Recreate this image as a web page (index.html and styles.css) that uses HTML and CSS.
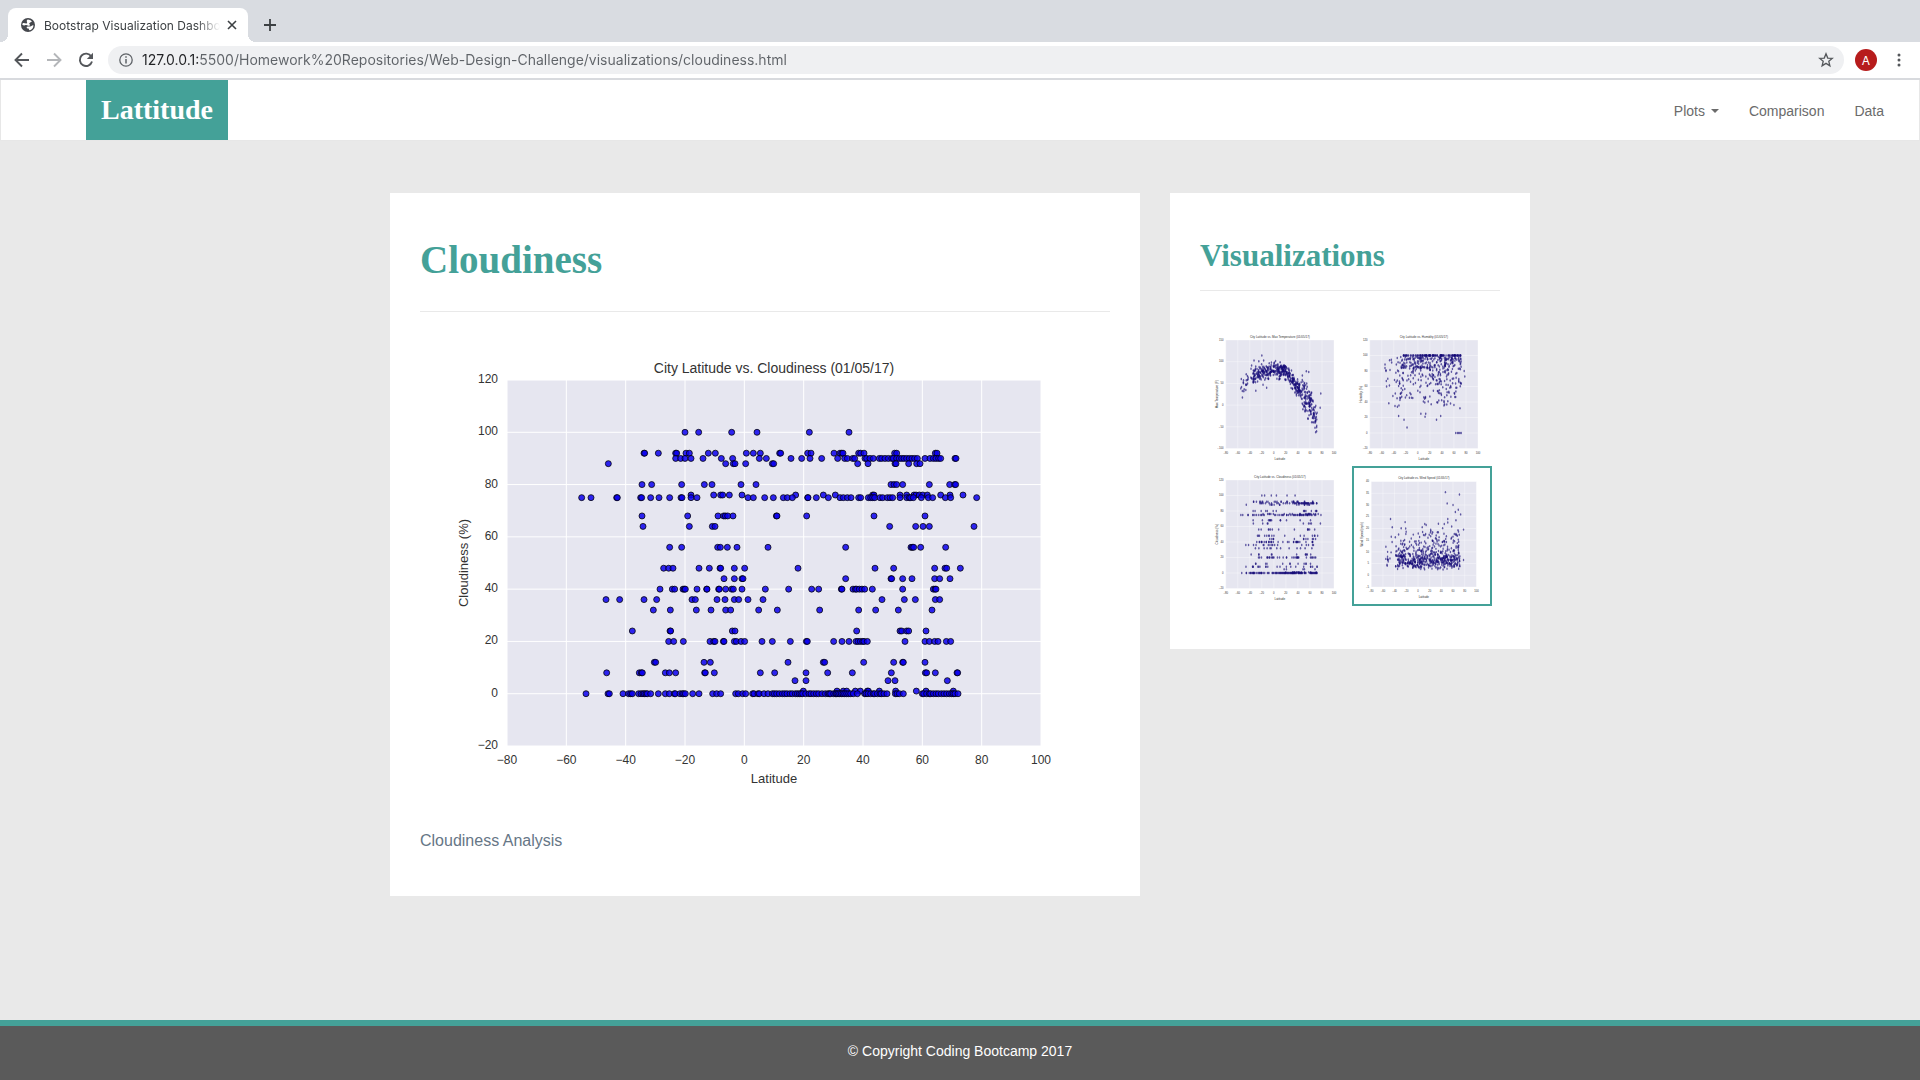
FILE: index.html
```html
<!DOCTYPE html>
<html lang="en">
<head>
<meta charset="utf-8">
<meta name="viewport" content="width=device-width, initial-scale=1">
<title>Bootstrap Visualization Dashboard</title>
<link rel="stylesheet" href="styles.css">
</head>
<body>
<header class="browser">
  <div class="tabstrip">
    <div class="tab">
      <svg class="tab-icon" viewBox="0 0 24 24" aria-hidden="true"><circle cx="12" cy="12" r="12" fill="#45484d"/><path d="M3 9c3-1 5 1 7 0 2-2-2-3 1-6 2-1 3 1 4 0l4 3c-2 0-3 2-5 3 0 2 3 3 1 4-3 1-4-2-7-1-2 1-4 1-6-1zM10 15c3-1 6 0 7-1l4-2c1 4-2 8-6 9-2 0-1-2-2-3-2 0-4 0-3-3z" fill="#fff"/></svg>
      <span class="tab-title">Bootstrap Visualization Dashboard</span>
      <button class="icon-button tab-close" aria-label="Close tab"><svg viewBox="0 0 10 10"><path d="M1 1l8 8M9 1L1 9" stroke="#3c4043" stroke-width="1.6"/></svg></button>
    </div>
    <button class="icon-button tab-new" aria-label="New tab"><svg viewBox="0 0 12 12"><path d="M6 0v12M0 6h12" stroke="#3c4043" stroke-width="1.8"/></svg></button>
  </div>
  <div class="toolbar">
    <button class="icon-button tool" aria-label="Back"><svg viewBox="0 0 16 16"><path d="M15 8H2M8 1.500L1.500 8L8 14.500" fill="none" stroke="#54575b" stroke-width="1.900"/></svg></button>
    <button class="icon-button tool" aria-label="Forward"><svg viewBox="0 0 16 16"><path d="M1 8h13M8 1.500L14.500 8L8 14.500" fill="none" stroke="#b4b6b9" stroke-width="1.900"/></svg></button>
    <button class="icon-button tool" aria-label="Reload"><svg viewBox="0 0 16 16"><path d="M13.300 4.500A6.200 6.200 0 1 0 14 9.500" fill="none" stroke="#54575b" stroke-width="1.900"/><path d="M15 .8V7H8.800z" fill="#54575b"/></svg></button>
    <div class="address">
      <svg class="address-icon" viewBox="0 0 14 14" aria-hidden="true"><circle cx="7" cy="7" r="6.200" fill="none" stroke="#5f6368" stroke-width="1.300"/><path d="M7 6v4.500M7 3.300v1.500" stroke="#5f6368" stroke-width="1.500"/></svg>
      <input class="address-input" type="text" aria-label="Address" value="127.0.0.1:5500/Homework%20Repositories/Web-Design-Challenge/visualizations/cloudiness.html">
      <button class="icon-button star" aria-label="Bookmark"><svg viewBox="0 0 24 24"><path d="M12 2.800l2.600 6.300 6.800.5-5.200 4.400 1.600 6.600-5.800-3.500-5.800 3.500 1.600-6.600-5.200-4.400 6.800-.5z" fill="none" stroke="#54575b" stroke-width="2"/></svg></button>
    </div>
    <button class="avatar">A</button>
    <button class="icon-button menu" aria-label="Menu"><svg viewBox="0 0 4 14"><circle cx="2" cy="2" r="1.500"/><circle cx="2" cy="7" r="1.500"/><circle cx="2" cy="12" r="1.500"/></svg></button>
  </div>
</header>

<nav class="navbar">
  <a class="brand" href="#">Lattitude</a>
  <div class="nav-links">
    <button class="nav-link">Plots<span class="caret"></span></button>
    <a class="nav-link" href="#">Comparison</a>
    <a class="nav-link" href="#">Data</a>
  </div>
</nav>

<main class="content">
  <article class="card">
    <h1 class="title">Cloudiness</h1>
    <svg class="chart" id="cloudiness" viewBox="0 0 690 470" role="img"></svg>
    <p class="analysis">Cloudiness Analysis</p>
  </article>
  <aside class="card">
    <h2 class="subtitle">Visualizations</h2>
    <div class="thumbs">
      <a class="thumb" href="#"><svg id="thumb-temperature" viewBox="0 0 560 560" role="img"></svg></a>
      <a class="thumb" href="#"><svg id="thumb-humidity" viewBox="0 0 560 560" role="img"></svg></a>
      <a class="thumb" href="#"><svg id="thumb-cloudiness" viewBox="0 0 560 560" role="img"></svg></a>
      <a class="thumb thumb-active" href="#"><svg id="thumb-wind" viewBox="0 0 560 560" role="img"></svg></a>
    </div>
  </aside>
</main>

<footer class="footer">© Copyright Coding Bootcamp 2017</footer>
<script src="charts.js"></script>
</body>
</html>
```
FILE: styles.css
```css
* { box-sizing: border-box; }

body {
  margin: 0;
  min-height: 100vh;
  display: flex;
  flex-direction: column;
  background: #e9e9e9;
  font-family: Arial, "Liberation Sans", sans-serif;
  font-size: 14px;
}

button {
  border: 0;
  padding: 0;
  background: none;
  font: inherit;
  color: inherit;
}

a { text-decoration: none; }
svg { display: block; }

/* Browser frame */
.browser {
  background: #fff;
  border-bottom: 2px solid #d8dade;
  font-family: Inter, Roboto, sans-serif;
}

.tabstrip {
  display: flex;
  align-items: center;
  height: 42px;
  padding: 8px 8px 0;
  gap: 16px;
  background: #d9dce1;
}

.tab {
  position: relative;
  display: flex;
  align-items: center;
  width: 240px;
  height: 34px;
  padding: 0 11px 0 13px;
  border-radius: 8px 8px 0 0;
  background: #fff;
}

.tab::before,
.tab::after {
  content: "";
  position: absolute;
  bottom: 0;
  width: 8px;
  height: 8px;
}

.tab::before {
  left: -8px;
  background: radial-gradient(circle at 0 0, #d9dce1 8px, #fff 8px);
}

.tab::after {
  right: -8px;
  background: radial-gradient(circle at 100% 0, #d9dce1 8px, #fff 8px);
}

.tab-icon { width: 14px; height: 14px; flex: none; }

.tab-title {
  flex: 1;
  min-width: 0;
  margin: 0 7px 0 9px;
  overflow: hidden;
  white-space: nowrap;
  font-size: 12px;
  color: #3c4043;
  -webkit-mask-image: linear-gradient(to left, transparent, #000 24px);
  mask-image: linear-gradient(to left, transparent, #000 24px);
}

.icon-button { flex: none; display: flex; }
.icon-button svg { width: 100%; height: 100%; }
.tab-close { width: 10px; height: 10px; }
.tab-new { width: 12px; height: 12px; }

.toolbar {
  display: flex;
  align-items: center;
  height: 36px;
  padding: 0 19px 0 14px;
  gap: 16px;
}

.tool { width: 16px; height: 16px; }

.address {
  flex: 1;
  display: flex;
  align-items: center;
  height: 28px;
  margin-left: -2px;
  padding: 0 10px 0 11px;
  border-radius: 14px;
  background: #eff0f2;
}

.address-icon { width: 14px; height: 14px; flex: none; }

.address-input {
  flex: 1;
  min-width: 0;
  margin: 0 8px 0 9px;
  padding: 0;
  border: 0;
  font: 14px/20px Inter, Roboto, sans-serif;
  color: transparent;
  background: linear-gradient(to right, #202124 56px, #5f6368 56px);
  -webkit-background-clip: text;
  background-clip: text;
}

.star { width: 16px; height: 16px; }

.avatar {
  width: 22px;
  height: 22px;
  margin: 0 4px 0 -5px;
  border-radius: 50%;
  background: #b71c1c;
  color: #fff;
  font-size: 12px;
}

.menu { width: 4px; height: 14px; fill: #54575b; }

/* Site navigation */
.navbar {
  display: flex;
  align-items: center;
  justify-content: space-between;
  height: 61px;
  padding: 0 20px 0 85px;
  border: solid #e7e7e7;
  border-width: 0 1px 1px;
  background: #fff;
}

.brand {
  display: flex;
  align-items: center;
  align-self: stretch;
  padding: 0 15px;
  background: #44a198;
  color: #fff;
  font: bold 28px/30px Georgia, "Liberation Serif", serif;
}

.nav-links { display: flex; }

.nav-link {
  display: flex;
  align-items: center;
  padding: 5px 15px 3px;
  font-size: 14px;
  line-height: 20px;
  color: #6b6b6b;
}

.caret {
  margin-left: 6px;
  border: 4px solid transparent;
  border-top-color: #6b6b6b;
  border-bottom: 0;
}

/* Content */
.content {
  width: 100%;
  max-width: 1140px;
  margin: 52px auto;
  display: grid;
  grid-template-columns: 25fr 12fr;
  gap: 30px;
  align-items: start;
}

.card {
  min-width: 0;
  padding: 30px;
  background: #fff;
}

.title,
.subtitle {
  margin: 0;
  padding-top: 16px;
  border-bottom: 1px solid #e9e9e9;
  color: #44a198;
  font-family: Georgia, "Liberation Serif", serif;
}

.title { font-size: 39px; line-height: 42px; padding-bottom: 30px; }
.subtitle { font-size: 31px; line-height: 34px; padding-bottom: 17px; }

.chart { width: 100%; height: auto; margin-top: 18px; }

.analysis {
  margin: 31px 0 15px;
  font-size: 16px;
  line-height: 20px;
  color: #667686;
}

.thumbs {
  display: grid;
  grid-template-columns: 140px 140px;
  justify-content: center;
  column-gap: 4px;
  margin: 35px 0 13px;
}

.thumb { border: 0 solid #44a198; }
.thumb-active { border-width: 2px; }

/* Charts */
.plot-area { fill: #e6e6f0; }
.grid-line { stroke: #fff; stroke-width: 1; }
.label { fill: #333; font-size: 12px; }
.axis-name { font-size: 13px; }
.heading { font-size: 14px; }
.marker { fill: #0a00ee; fill-opacity: .85; stroke: #000; stroke-opacity: .75; stroke-width: 1; }
.thumb .grid-line { stroke-width: 2; stroke-opacity: .7; }
.thumb .label { font-size: 11px; }
.thumb .axis-name, .thumb .heading { font-size: 12px; }
.thumb .marker { fill: #150a78; fill-opacity: .65; stroke: none; }

/* Footer */
.footer {
  margin-top: auto;
  padding: 13px 15px 17px;
  border-top: 6px solid #44a198;
  background: #5a5a5a;
  color: #fff;
  line-height: 24px;
  text-align: center;
}
```
FILE: charts.js
```js
// Each row: cloudiness value, then positions west and east of the seam.
// Positions count thirds of a drawing unit; the east list starts at 900.
const rows = [
  [100, [735,776,875], [51,208,327]],
  [92, [612,614,655,707,710,738,748,805,826,919], [40,61,119,122,203,213,282,300,305,309,356,362,372,464,470,586,591]],
  [90, [707,722,735,753,789,844,878], [58,79,153,185,210,245,293,314,322,338,344,375,380,390,400,418,425,435,445,455,460,470,478,485,492,500,508,516,524,532,555,570,580,588,596,602,645,648]],
  [88, [505,857,880,885,917], [97,101,353,384,465,468,506,530,540]],
  [80, [606,635,725,793,816,903], [48,453,462,470,488,568,629,644,647]],
  [76, [753,821,842,848,868,906], [167,250,286,398,402,480,500,522,528,538,548,562,602,630,669]],
  [75, [425,453,530,532,602,605,632,657,689,723,726,753,771,924], [40,74,100,130,142,157,203,204,229,265,300,310,322,333,356,362,385,392,398,404,420,428,442,450,458,480,500,508,512,520,544,565,578,616,632,710]],
  [68, [606,743,834,851,856,863,879], [109,111,200,402,555]],
  [64, [609,748,817,825], [449,527,549,568,702]],
  [56, [689,725,833,841,862,891], [84,317,513,517,521,542,617]],
  [48, [671,686,699,777,808,840,842,883,914], [174,405,461,584,615,620,661]],
  [44, [852,883,906,909], [317,453,455,488,516,584,599,630]],
  [40, [660,697,704,729,733,736,771,800,801,836,838,857,875,880,906], [76,146,215,236,304,306,339,346,350,358,366,374,397,488,580,585,588]],
  [36, [498,539,612,650,756,766,831,855,883,896,924], [69,426,493,526,586,599]],
  [32, [640,691,769,813,857,872], [56,112,239,356,407,475,576]],
  [24, [577,690,692,877,885], [350,480,485,500,506,558]],
  [20, [686,701,730,810,821,825,850,852,883,889,903,914], [66,97,151,199,202,281,306,327,348,354,361,368,372,382,495,555,568,584,594,619,632]],
  [12, [643,647,792,811], [144,250,254,371,461,488,490,555]],
  [8, [500,598,604,607,676,688,707,794,796,823], [61,104,198,263,337,454,556,560,586,651,653]],
  [5, [], [165,198,444,465,622]],
  [1, [], [190,291,310,320,346,361,382,385,418,467,529,558,640]],
  [0, [438,504,508,549,566,572,577,596,603,609,613,618,622,632,655,676,688,703,706,720,727,731,736,758,777,818,830,842,887,895,908,917], [38,42,54,58,72,84,97,103,110,118,127,134,141,150,157,166,172,178,183,188,197,207,213,221,229,236,246,256,264,268,272,281,287,290,294,299,304,309,314,320,326,332,340,352,374,378,384,392,400,404,412,420,424,432,441,466,471,478,490,547,551,560,568,572,580,588,595,604,612,620,628,635,640,645,654]]
];
const toLatitude = u => (u - 201) / 8.9 - 80;
const cloudiness = rows.flatMap(([v, west, east]) =>
  west.concat(east.map(e => e + 900)).map(u => [toLatitude(u), v]));

let seed = 7;
const rand = () => (seed = seed * 16807 % 2147483647) / 2147483647;
const gauss = () => rand() + rand() + rand() + rand() - 2;
const expo = () => -Math.log(1 - rand());
const latitude = () => {
  const r = rand();
  if (r < .04) return -55 + rand() * 20;
  if (r < .36) return -35 + rand() * 40;
  return 5 + rand() * 67;
};

const curve = [[-56, 36], [-45, 58], [-30, 70], [-10, 78], [18, 80], [32, 55], [45, 28], [60, 8], [66, -20], [73, -45]];
const meanTemperature = lat => {
  const i = Math.max(1, curve.findIndex(p => p[0] >= lat));
  const [a, b] = [curve[i - 1], curve[i]];
  return a[1] + (b[1] - a[1]) * (lat - a[0]) / (b[0] - a[0]);
};
const temperature = [[-20, 114], [-33, 103], [-25, 101], [-17, 103], [-37, 91], [54, 78], [58, 76], [-30, 33], [-12, 40], [-18, 47], [78, 27], [77, -6], [71, -60], [-55, 38]];
for (let i = 0; i < 560; i++) {
  const lat = latitude();
  temperature.push([lat, meanTemperature(lat) + gauss() * (lat > 45 ? 30 : 15)]);
}

const humidity = [[-53, 80], [-50, 70], [-52, 60], [-38, 35], [-34, 34], [-32, 22], [-23, 17], [-18, 7], [5, 25], [13, 25], [12, 21], [31, 17], [38, 22], [60, 36], [70, 32], [78, 73], [77, 80], [63, 0], [66, 0], [68, 0], [70, 0], [72, 0]];
for (let i = 0; i < 110; i++) humidity.push([-25 + rand() * 97, 100]);
for (let i = 0; i < 400; i++) {
  const lat = latitude();
  humidity.push([lat, Math.max(35 + rand() * 20, 98 - expo() * (lat > -25 && lat < 5 ? 16 : 25))]);
}

const wind = [[47, 35.5], [71, 34.500], [50, 30.700], [60, 30], [-47, 24], [-22, 22.700], [64, 27], [69, 28], [51, 24], [73, 26], [78, 19.500], [78, 6.500], [-55, 7], [-53, 4.500], [-52, 10], [14, 21.500], [35, 22], [51, 22.500], [65, 23.500], [-44, 20.500]];
for (let i = 0; i < 600; i++) {
  const lat = latitude();
  const spread = lat > -20 && lat < 5 ? 3 : 5;
  wind.push([lat, Math.min(16 + rand() * 6, 1 + (gauss() + 2) * 1.500 + expo() * spread)]);
}

function add(parent, name, attrs, text) {
  const el = document.createElementNS('http://www.w3.org/2000/svg', name);
  for (const key in attrs) el.setAttribute(key, attrs[key]);
  if (text !== undefined) el.textContent = text;
  parent.appendChild(el);
}

const large = { left: 87, right: 621, top: 50, bottom: 416, heading: 43, ticks: 434, axis: 453, side: 48, rx: 3, ry: 3 };
const small = { left: 71, right: 504, top: 56, bottom: 490, heading: 47, ticks: 512, axis: 534, side: 38, rx: 3, ry: 5 };

function draw(id, box, heading, yName, min, max, step, points) {
  const svg = document.getElementById(id);
  const x = v => box.left + (v + 80) / 180 * (box.right - box.left);
  const y = v => box.bottom - (v - min) / (max - min) * (box.bottom - box.top);
  const mid = x(10);
  const middleY = (box.top + box.bottom) / 2;
  const show = v => String(v).replace('-', '\u2212');
  svg.setAttribute('aria-label', heading);
  add(svg, 'rect', { class: 'plot-area', x: box.left, y: box.top, width: box.right - box.left, height: box.bottom - box.top });
  for (let v = -80; v <= 100; v += 20) {
    add(svg, 'line', { class: 'grid-line', x1: x(v), x2: x(v), y1: box.top, y2: box.bottom });
    add(svg, 'text', { class: 'label', x: x(v), y: box.ticks, 'text-anchor': 'middle' }, show(v));
  }
  for (let v = min; v <= max; v += step) {
    add(svg, 'line', { class: 'grid-line', x1: box.left, x2: box.right, y1: y(v), y2: y(v) });
    add(svg, 'text', { class: 'label', x: box.left - 9, y: y(v) + 3, 'text-anchor': 'end' }, show(v));
  }
  for (const [lat, v] of points) add(svg, 'ellipse', { class: 'marker', cx: x(lat), cy: y(v), rx: box.rx, ry: box.ry });
  add(svg, 'text', { class: 'label heading', x: mid, y: box.heading, 'text-anchor': 'middle' }, heading);
  add(svg, 'text', { class: 'label axis-name', x: mid, y: box.axis, 'text-anchor': 'middle' }, 'Latitude');
  add(svg, 'text', { class: 'label axis-name', transform: `translate(${box.side} ${middleY}) rotate(-90)`, 'text-anchor': 'middle' }, yName);
}

draw('cloudiness', large, 'City Latitude vs. Cloudiness (01/05/17)', 'Cloudiness (%)', -20, 120, 20, cloudiness);
draw('thumb-temperature', small, 'City Latitude vs. Max Temperature (01/05/17)', 'Max Temperature (F)', -100, 150, 50, temperature);
draw('thumb-humidity', small, 'City Latitude vs. Humidity (01/05/17)', 'Humidity (%)', -20, 120, 20, humidity);
draw('thumb-cloudiness', small, 'City Latitude vs. Cloudiness (01/05/17)', 'Cloudiness (%)', -20, 120, 20, cloudiness);
draw('thumb-wind', small, 'City Latitude vs. Wind Speed (01/05/17)', 'Wind Speed (mph)', -5, 40, 5, wind);
```
